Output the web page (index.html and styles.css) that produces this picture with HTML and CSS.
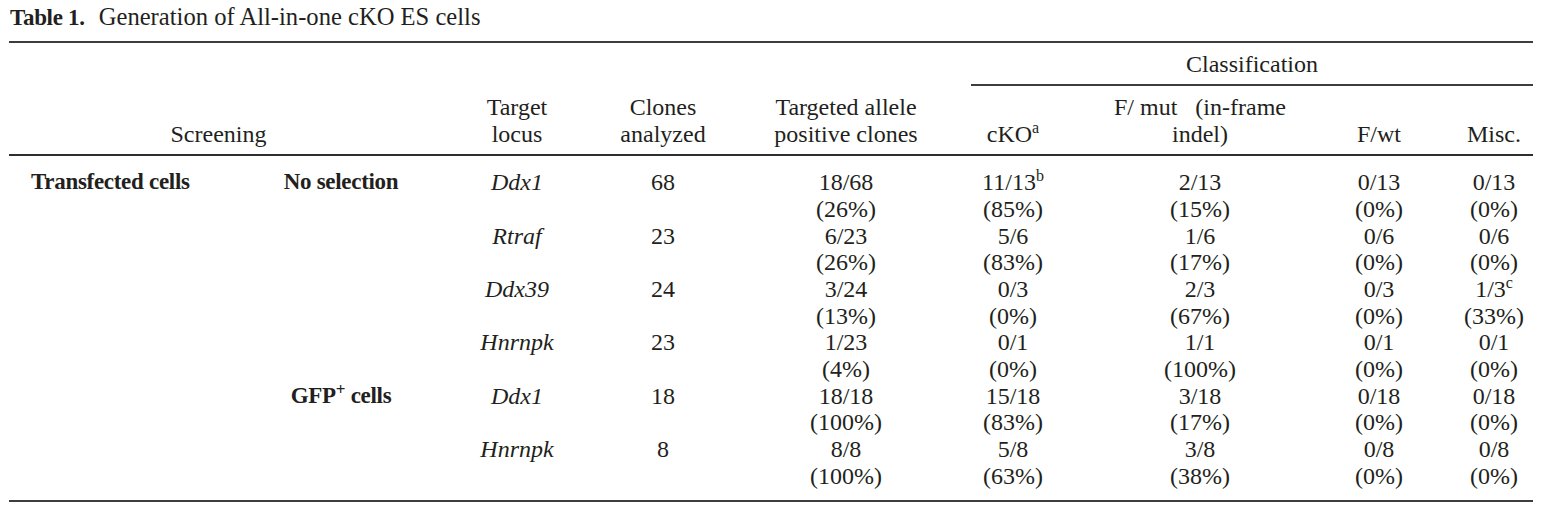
FILE: index.html
```html
<!DOCTYPE html>
<html lang="en">
<head>
<meta charset="utf-8">
<title>Table 1. Generation of All-in-one cKO ES cells</title>
<link rel="stylesheet" href="styles.css">
</head>
<body>
<div class="page">
  <div class="caption"><span class="caption-label">Table 1.</span> <span class="caption-text">Generation of All-in-one cKO ES cells</span></div>
  <table class="data">
    <colgroup>
      <col class="w1"><col class="w2"><col class="w3"><col class="w4"><col class="w5"><col class="w6"><col class="w7"><col class="w8"><col class="w9">
    </colgroup>
    <thead>
      <tr class="head-top">
        <th rowspan="2" colspan="2" class="hd screening">Screening</th>
        <th rowspan="2" class="hd">Target<br>locus</th>
        <th rowspan="2" class="hd">Clones<br>analyzed</th>
        <th rowspan="2" class="hd col5">Targeted allele<br>positive clones</th>
        <th colspan="4" class="classif"><div class="classif-label">Classification</div></th>
      </tr>
      <tr class="head-sub">
        <th class="hd">cKO<sup>a</sup></th>
        <th class="hd">F/ mut&nbsp;&nbsp; (in-frame<br>indel)</th>
        <th class="hd">F/wt</th>
        <th class="hd col9">Misc.</th>
      </tr>
    </thead>
    <tbody>
      <tr class="first">
        <td class="group">Transfected cells</td>
        <td class="sub">No selection</td>
        <td class="locus">Ddx1</td>
        <td>68</td>
        <td class="col5">18/68<br>(26%)</td>
        <td>11/13<sup>b</sup><br>(85%)</td>
        <td>2/13<br>(15%)</td>
        <td>0/13<br>(0%)</td>
        <td class="col9">0/13<br>(0%)</td>
      </tr>
      <tr>
        <td></td>
        <td></td>
        <td class="locus">Rtraf</td>
        <td>23</td>
        <td class="col5">6/23<br>(26%)</td>
        <td>5/6<br>(83%)</td>
        <td>1/6<br>(17%)</td>
        <td>0/6<br>(0%)</td>
        <td class="col9">0/6<br>(0%)</td>
      </tr>
      <tr>
        <td></td>
        <td></td>
        <td class="locus">Ddx39</td>
        <td>24</td>
        <td class="col5">3/24<br>(13%)</td>
        <td>0/3<br>(0%)</td>
        <td>2/3<br>(67%)</td>
        <td>0/3<br>(0%)</td>
        <td class="col9">1/3<sup>c</sup><br>(33%)</td>
      </tr>
      <tr>
        <td></td>
        <td></td>
        <td class="locus">Hnrnpk</td>
        <td>23</td>
        <td class="col5">1/23<br>(4%)</td>
        <td>0/1<br>(0%)</td>
        <td>1/1<br>(100%)</td>
        <td>0/1<br>(0%)</td>
        <td class="col9">0/1<br>(0%)</td>
      </tr>
      <tr>
        <td></td>
        <td class="sub">GFP<sup class="sup-bold">+</sup> cells</td>
        <td class="locus">Ddx1</td>
        <td>18</td>
        <td class="col5">18/18<br>(100%)</td>
        <td>15/18<br>(83%)</td>
        <td>3/18<br>(17%)</td>
        <td>0/18<br>(0%)</td>
        <td class="col9">0/18<br>(0%)</td>
      </tr>
      <tr class="last">
        <td></td>
        <td></td>
        <td class="locus">Hnrnpk</td>
        <td>8</td>
        <td class="col5">8/8<br>(100%)</td>
        <td>5/8<br>(63%)</td>
        <td>3/8<br>(38%)</td>
        <td>0/8<br>(0%)</td>
        <td class="col9">0/8<br>(0%)</td>
      </tr>
    </tbody>
  </table>
</div>
</body>
</html>
```

FILE: styles.css
```css
html, body {
  margin: 0;
  padding: 0;
  background: #ffffff;
}

body {
  font-family: "Liberation Serif", "Times New Roman", serif;
  font-size: 24px;
  color: #231f20;
}

.page {
  padding: 0 16px 0 9px;
}

.caption {
  padding: 3px 0 0 1px;
  line-height: 27px;
  height: 27px;
  white-space: nowrap;
}

.caption-label {
  font-weight: bold;
  font-size: 23px;
  letter-spacing: -0.3px;
  margin-right: 8px;
}

.caption-text {
  font-size: 24.6px;
}

.data {
  margin-top: 11px;
  width: 1524px;
  table-layout: fixed;
  border-collapse: separate;
  border-spacing: 0;
  border-top: 2px solid #3d3d3d;
  border-bottom: 2px solid #3d3d3d;
}

.w1 { width: 250px; }
.w2 { width: 164px; }
.w3 { width: 188px; }
.w4 { width: 104px; }
.w5 { width: 256px; }
.w6 { width: 84px; }
.w7 { width: 290px; }
.w8 { width: 68px; }
.w9 { width: 120px; }

th, td {
  padding: 0;
  font-weight: normal;
  text-align: center;
  white-space: nowrap;
}

.hd {
  line-height: 27px;
  vertical-align: bottom;
  padding-bottom: 6.2px;
  border-bottom: 2px solid #2e2e2e;
}

.head-sub .hd {
  padding-top: 7.8px;
}

.screening {
  padding-left: 5px;
}

.classif {
  padding: 8px 0 0 0;
  vertical-align: top;
}

.classif-label {
  line-height: 27px;
  padding-bottom: 6px;
  border-bottom: 2px solid #3d3d3d;
}

.col5 {
  padding-left: 6px;
}

.col9 {
  padding-left: 42px;
}

td {
  line-height: 26.67px;
  vertical-align: top;
}

tr.first td {
  padding-top: 13.4px;
}

tr.last td {
  padding-bottom: 10.2px;
}

td.group {
  text-align: left;
  padding-left: 22px;
  font-weight: bold;
  font-size: 23px;
  letter-spacing: -0.3px;
}

td.sub {
  font-weight: bold;
  font-size: 23px;
  letter-spacing: -0.3px;
}

td.locus {
  font-style: italic;
}

sup {
  font-size: 16px;
  line-height: 0;
  vertical-align: 9px;
}

.sup-bold {
  font-size: 17px;
  vertical-align: 8px;
}
```
